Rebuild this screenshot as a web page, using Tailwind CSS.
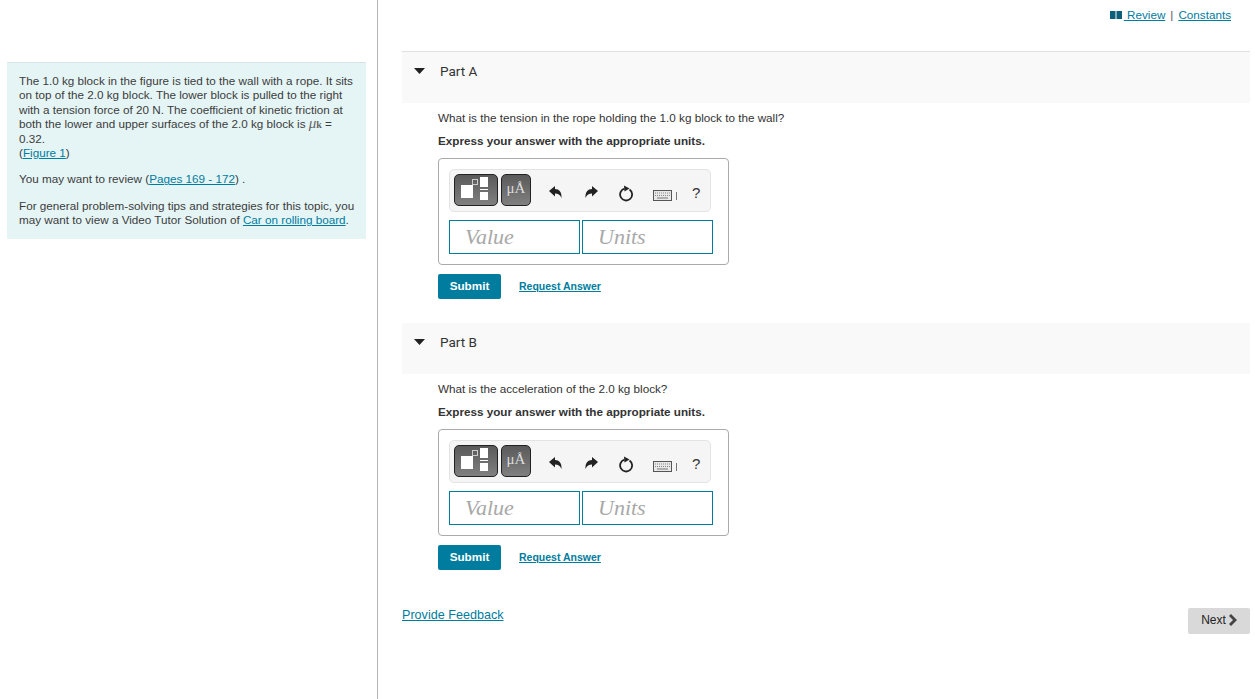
<!DOCTYPE html>
<html lang="en">
<head>
    <meta charset="UTF-8">
    <title>Part A</title>
    <script src="https://cdn.jsdelivr.net/npm/@tailwindcss/browser@4"></script>
</head>
<body class="bg-white text-[#333] font-['Liberation_Sans',Arial,sans-serif] text-[11.7px]">
<div class="flex h-[699px] w-[1255px] overflow-hidden">

    <!-- Left column -->
    <aside class="w-[378px] h-full shrink-0 border-r border-[#b5b5b5] pt-[62px] pl-[7px] pr-[11px]">
        <div class="bg-[#e5f5f6] border-t border-[#d9e4e6] w-[359px] h-[177px] pl-3 pr-2 pt-[11px] leading-[14.4px] text-[#3c3c3c]">
            <p>The 1.0 kg block in the figure is tied to the wall with a rope. It sits on top of the 2.0 kg block. The lower block is pulled to the right with a tension force of 20 N. The coefficient of kinetic friction at both the lower and upper surfaces of the 2.0 kg block is <span class="inline-block h-[10px] font-['Liberation_Serif',serif] italic text-[15px] leading-[10px] text-[#666]">μ<span class="not-italic font-bold text-[10px] leading-none">k</span></span> = 0.32.<br>(<a class="text-[#007c9e] underline" href="#">Figure 1</a>)</p>
            <p class="mt-[12px]">You may want to review (<a class="text-[#007c9e] underline" href="#">Pages 169 - 172</a>) .</p>
            <p class="mt-[12px]">For general problem-solving tips and strategies for this topic, you may want to view a Video Tutor Solution of <a class="text-[#007c9e] underline" href="#">Car on rolling board</a>.</p>
        </div>
    </aside>

    <!-- Right column -->
    <main class="flex-1 pl-6 pr-[5px]">
        <div class="h-[51px] pt-[8px] pr-[19px] flex justify-end items-start gap-[5px] leading-[14px] text-[#555]">
            <a class="flex items-center text-[#007c9e] underline whitespace-pre" href="#">
                <svg class="mr-[2px]" width="12" height="8" viewBox="0 0 12 8"><rect width="5.500" height="8" fill="#0b5f78"/><rect x="6.500" width="5.500" height="8" fill="#0b5f78"/></svg>
                <span> Review</span></a>
            <span>|</span>
            <a class="text-[#007c9e] underline" href="#">Constants</a>
        </div>

        <!-- Part A -->
        <section class="h-[272px]">
            <div class="h-[52px] bg-[#f9f9f9] border-t border-[#e0e0e0] flex items-start pt-[11px] pl-[12px]">
                <svg class="mt-[5px]" width="11" height="6" viewBox="0 0 11 6"><path d="M0 0H11L5.500 6Z" fill="#222"/></svg>
                <span class="ml-[15px] font-['Roboto',sans-serif] text-[13.5px] leading-[16px] text-[#333]">Part A</span>
            </div>
            <div class="pl-9">
                <p class="mt-[8px] leading-[14px]">What is the tension in the rope holding the 1.0 kg block to the wall?</p>
                <p class="mt-[9px] leading-[14px] font-bold">Express your answer with the appropriate units.</p>
                <div class="mt-[10px] w-[291px] h-[107px] border border-[#aaa] rounded-[4px] pt-[10px] pl-[10px]">
                    <div class="w-[262px] h-[43px] bg-[#f5f5f5] border border-[#e3e3e3] rounded-[5px] flex items-start pl-[4px] pt-[4px]">
                        <div class="w-[44px] h-[32px] rounded-[5px] border border-[#222] bg-gradient-to-b from-[#5a5a5a] to-[#808080] relative">
                            <div class="absolute left-[6px] top-[10px] w-[12px] h-[13px] bg-white"></div>
                            <div class="absolute left-[17px] top-[4px] w-[6px] h-[6px] border border-[#ccc]"></div>
                            <div class="absolute left-[25px] top-[2px] w-[8px] h-[10px] bg-white"></div>
                            <div class="absolute left-[25px] top-[14px] w-[8px] h-[1px] bg-white"></div>
                            <div class="absolute left-[25px] top-[17px] w-[8px] h-[8px] bg-white"></div>
                        </div>
                        <div class="ml-[3px] w-[30px] h-[32px] rounded-[5px] border border-[#222] bg-gradient-to-b from-[#5a5a5a] to-[#808080] text-[#ddd] font-['Liberation_Serif',serif] text-[15px] leading-[26px] text-center">μÅ</div>
                        <svg class="ml-[18px] mt-[12px]" width="13" height="13" viewBox="0 0 13 13"><path d="M0 5L6 0V3C10 3 13 6 12.500 12C11 8.500 9 7.500 6 7.500V10.500Z" fill="#222"/></svg>
                        <svg class="ml-[23px] mt-[12px]" width="13" height="13" viewBox="0 0 13 13"><path d="M13 5L7 0V3C3 3 0 6 .5 12C2 8.500 4 7.500 7 7.500V10.500Z" fill="#222"/></svg>
                        <svg class="ml-[21px] mt-[11px]" width="15" height="17" viewBox="0 0 15 17"><path d="M10.500 4.500A6 6 0 1 1 5.500 3.700" fill="none" stroke="#222" stroke-width="1.800"/><path d="M5 .5L10.500 3.500L5.500 6.500Z" fill="#222"/></svg>
                        <svg class="ml-[19px] mt-[16px]" width="19" height="11" viewBox="0 0 19 11"><rect x=".5" y=".5" width="18" height="10" fill="#e8e8e8" stroke="#555"/><path d="M2 3H17M2 5.500H17" stroke="#888" stroke-dasharray="1 1"/><path d="M4 8H15" stroke="#777"/></svg>
                        <div class="ml-[4px] mt-[18px] w-px h-[8px] bg-[#777]"></div>
                        <span class="ml-[15px] mt-[11px] text-[15px] leading-[16px] text-[#333]">?</span>
                    </div>
                    <div class="mt-[8px] flex gap-[2px]">
                        <div class="w-[131px] h-[34px] border border-[#007c9e] pl-[15px] font-['Liberation_Serif',serif] italic text-[22px] leading-[32px] text-[#a8a8a8]">Value</div>
                        <div class="w-[131px] h-[34px] border border-[#007c9e] pl-[15px] font-['Liberation_Serif',serif] italic text-[22px] leading-[32px] text-[#a8a8a8]">Units</div>
                    </div>
                </div>
                <div class="mt-[9px] flex items-center">
                    <button class="w-[63px] h-[25px] pb-[2px] bg-[#007c9e] rounded-[2px] text-white font-bold text-[11.7px]">Submit</button>
                    <a class="ml-[18px] text-[10.5px] font-bold text-[#007c9e] underline" href="#">Request Answer</a>
                </div>
            </div>
        </section>

        <!-- Part B -->
        <section class="h-[271px]">
            <div class="h-[51px] bg-[#f9f9f9] flex items-start pt-[11px] pl-[12px]">
                <svg class="mt-[5px]" width="11" height="6" viewBox="0 0 11 6"><path d="M0 0H11L5.500 6Z" fill="#222"/></svg>
                <span class="ml-[15px] font-['Roboto',sans-serif] text-[13.5px] leading-[16px] text-[#333]">Part B</span>
            </div>
            <div class="pl-9">
                <p class="mt-[8px] leading-[14px]">What is the acceleration of the 2.0 kg block?</p>
                <p class="mt-[9px] leading-[14px] font-bold">Express your answer with the appropriate units.</p>
                <div class="mt-[10px] w-[291px] h-[107px] border border-[#aaa] rounded-[4px] pt-[10px] pl-[10px]">
                    <div class="w-[262px] h-[43px] bg-[#f5f5f5] border border-[#e3e3e3] rounded-[5px] flex items-start pl-[4px] pt-[4px]">
                        <div class="w-[44px] h-[32px] rounded-[5px] border border-[#222] bg-gradient-to-b from-[#5a5a5a] to-[#808080] relative">
                            <div class="absolute left-[6px] top-[10px] w-[12px] h-[13px] bg-white"></div>
                            <div class="absolute left-[17px] top-[4px] w-[6px] h-[6px] border border-[#ccc]"></div>
                            <div class="absolute left-[25px] top-[2px] w-[8px] h-[10px] bg-white"></div>
                            <div class="absolute left-[25px] top-[14px] w-[8px] h-[1px] bg-white"></div>
                            <div class="absolute left-[25px] top-[17px] w-[8px] h-[8px] bg-white"></div>
                        </div>
                        <div class="ml-[3px] w-[30px] h-[32px] rounded-[5px] border border-[#222] bg-gradient-to-b from-[#5a5a5a] to-[#808080] text-[#ddd] font-['Liberation_Serif',serif] text-[15px] leading-[26px] text-center">μÅ</div>
                        <svg class="ml-[18px] mt-[12px]" width="13" height="13" viewBox="0 0 13 13"><path d="M0 5L6 0V3C10 3 13 6 12.500 12C11 8.500 9 7.500 6 7.500V10.500Z" fill="#222"/></svg>
                        <svg class="ml-[23px] mt-[12px]" width="13" height="13" viewBox="0 0 13 13"><path d="M13 5L7 0V3C3 3 0 6 .5 12C2 8.500 4 7.500 7 7.500V10.500Z" fill="#222"/></svg>
                        <svg class="ml-[21px] mt-[11px]" width="15" height="17" viewBox="0 0 15 17"><path d="M10.500 4.500A6 6 0 1 1 5.500 3.700" fill="none" stroke="#222" stroke-width="1.800"/><path d="M5 .5L10.500 3.500L5.500 6.500Z" fill="#222"/></svg>
                        <svg class="ml-[19px] mt-[16px]" width="19" height="11" viewBox="0 0 19 11"><rect x=".5" y=".5" width="18" height="10" fill="#e8e8e8" stroke="#555"/><path d="M2 3H17M2 5.500H17" stroke="#888" stroke-dasharray="1 1"/><path d="M4 8H15" stroke="#777"/></svg>
                        <div class="ml-[4px] mt-[18px] w-px h-[8px] bg-[#777]"></div>
                        <span class="ml-[15px] mt-[11px] text-[15px] leading-[16px] text-[#333]">?</span>
                    </div>
                    <div class="mt-[8px] flex gap-[2px]">
                        <div class="w-[131px] h-[34px] border border-[#007c9e] pl-[15px] font-['Liberation_Serif',serif] italic text-[22px] leading-[32px] text-[#a8a8a8]">Value</div>
                        <div class="w-[131px] h-[34px] border border-[#007c9e] pl-[15px] font-['Liberation_Serif',serif] italic text-[22px] leading-[32px] text-[#a8a8a8]">Units</div>
                    </div>
                </div>
                <div class="mt-[9px] flex items-center">
                    <button class="w-[63px] h-[25px] pb-[2px] bg-[#007c9e] rounded-[2px] text-white font-bold text-[11.7px]">Submit</button>
                    <a class="ml-[18px] text-[10.5px] font-bold text-[#007c9e] underline" href="#">Request Answer</a>
                </div>
            </div>
        </section>

        <!-- Footer -->
        <div class="flex justify-between items-start">
            <a class="mt-[13px] text-[12.6px] leading-[16px] text-[#007c9e] underline" href="#">Provide Feedback</a>
            <button class="mt-[14px] w-[62px] h-[26px] pl-[1px] pb-[2px] bg-[#d9d9d9] rounded-[2px] text-[#222] text-[12px] flex items-center justify-center gap-[3px]">Next
                <svg width="9" height="12" viewBox="0 0 9 12"><path d="M0 2L2 0L8 6L2 12L0 10L4 6Z" fill="#444"/></svg>
            </button>
        </div>
    </main>
</div>
</body>
</html>
